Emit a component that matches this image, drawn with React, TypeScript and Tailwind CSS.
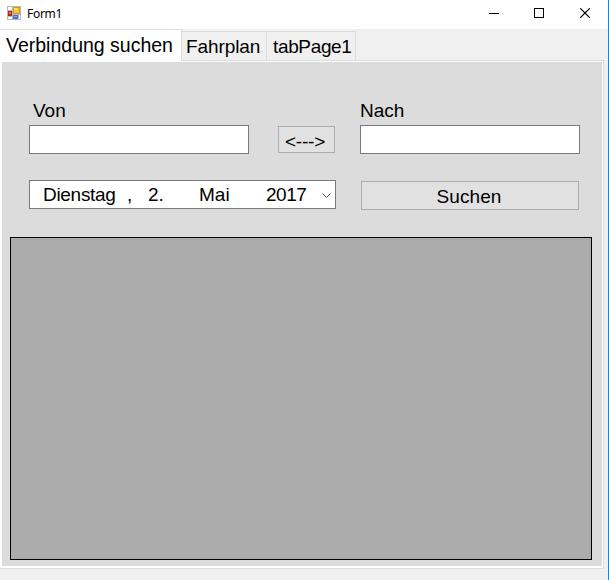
import React from "react";

const FORM_FONT = "font-['Liberation_Sans',Arial,sans-serif]";

function AppIcon() {
  return (
    <svg width="14" height="14" viewBox="0 0 14 14" shapeRendering="crispEdges">
      <rect width="14" height="14" fill="#b9b9b9" />
      <rect x="1" y="1" width="4" height="3" fill="#fff" />
      <rect x="1" y="11" width="4" height="2" fill="#fff" />
      <rect x="12" y="9" width="1" height="4" fill="#fff" />
      <rect x="1" y="5" width="4" height="5" fill="#b42318" />
      <rect x="2" y="6" width="2" height="2" fill="#e0786c" />
      <rect x="6" y="1" width="7" height="7" fill="#d99a0b" />
      <rect x="7" y="2" width="5" height="5" fill="#f6c52e" />
      <rect x="7" y="2" width="3" height="2" fill="#ffe68a" />
      <rect x="6" y="9" width="5" height="4" fill="#3f74dc" />
      <rect x="7" y="10" width="3" height="1" fill="#85adf4" />
    </svg>
  );
}

function TitleBar() {
  return (
    <header className="flex h-[29px] items-start bg-white pl-[7px] pr-[17px]">
      <div className="pt-[6px]">
        <AppIcon />
      </div>
      <span className="ml-[6px] mt-[6px] flex-1 font-['Noto_Sans','Open_Sans',sans-serif] text-[12px] leading-4 tracking-[-0.3px]">
        Form1
      </span>
      <svg width="102" height="10" viewBox="0 0 102 10" className="mt-2" fill="none" stroke="#000">
        <path d="M0 5.5H10M45.5 .5h9v9h-9z" shapeRendering="crispEdges" />
        <path d="M91.3 .3L100.7 9.7M100.7 .3L91.3 9.7" strokeWidth="1.15" />
      </svg>
    </header>
  );
}

function Tabs() {
  return (
    <nav className="flex h-[32px] items-end">
      <div className="h-[32px] w-[182px] border-r border-t border-[#dcdcdc] bg-white pl-[6px] text-[19.5px] leading-[30px]">
        Verbindung suchen
      </div>
      <div className="h-[30px] w-[85px] whitespace-nowrap border-b border-r border-t border-[#dcdcdc] pl-[4px] leading-[30px] tracking-[-0.1px]">
        Fahrplan
      </div>
      <div className="h-[30px] w-[89px] whitespace-nowrap border-b border-r border-t border-[#dcdcdc] pl-[6px] leading-[30px] tracking-[-0.35px]">
        tabPage1
      </div>
      <div className="h-[30px] w-[248px] border-b border-[#dcdcdc]" />
    </nav>
  );
}

function Field({ label, indent }: { label: string; indent?: boolean }) {
  return (
    <label className="block w-[220px]">
      <span className={indent ? "ml-[4px] block h-6 leading-[23px]" : "block h-6 leading-[23px]"}>{label}</span>
      <input className="mt-[2px] block h-[29px] w-full border border-[#7a7a7a] bg-white px-1 outline-none" />
    </label>
  );
}

function SearchForm() {
  return (
    <>
      <div className="flex items-end pl-[27px] pt-[37px]">
        <Field label="Von" indent />
        <button className="mb-px ml-[29px] h-[27px] w-[57px] whitespace-nowrap border border-[#adadad] bg-[#e1e1e1] pr-[3px] leading-[29px] tracking-[-0.2px]">
          {"<--->"}
        </button>
        <div className="ml-[25px]">
          <Field label="Nach" />
        </div>
      </div>
      <div className="flex items-start pl-[27px] pt-[26px]">
        <div className="flex h-[29px] w-[307px] border border-[#7a7a7a] bg-white pl-[13px] leading-[27px]">
          <span className="w-[84px] tracking-[-0.3px]">Dienstag</span>
          <span className="w-[21px]">,</span>
          <span className="w-[51px]">2.</span>
          <span className="w-[67px]">Mai</span>
          <span className="w-[56px] tracking-[-0.5px]">2017</span>
          <svg width="9" height="6" viewBox="0 0 9 6" className="mt-[12px]" fill="none" stroke="#555">
            <path d="M.5 .5L4.5 4.5L8.5 .5" />
          </svg>
        </div>
        <button className="ml-[25px] mt-px h-[29px] w-[218px] border border-[#adadad] bg-[#e1e1e1] pr-[2px] leading-[29px] tracking-[0.1px]">
          Suchen
        </button>
      </div>
    </>
  );
}

export default function App() {
  return (
    <div
      className={`h-[580px] w-[609px] overflow-hidden border-r border-[#1883d7] bg-[#f0f0f0] text-[19px] text-black ${FORM_FONT}`}
    >
      <TitleBar />
      <Tabs />
      <main className="h-[508px] w-[604px] border-b border-r border-[#dcdcdc] bg-white pb-[2px] pl-[2px] pr-px pt-px">
        <div className="h-full bg-[#dcdcdc]">
          <SearchForm />
          <div className="ml-[8px] mt-[27px] h-[323px] w-[582px] border border-black bg-[#ababab]" />
        </div>
      </main>
    </div>
  );
}
